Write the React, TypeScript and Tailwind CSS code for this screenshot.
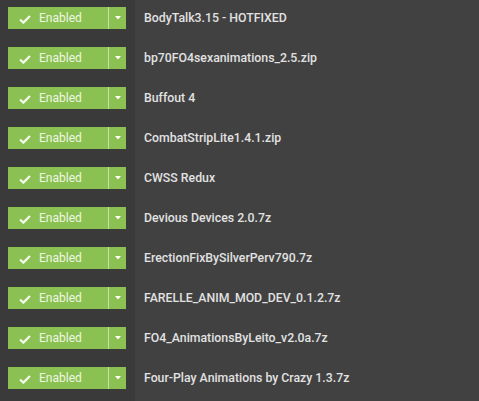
const mods = [
  'BodyTalk3.15 - HOTFIXED',
  'bp70FO4sexanimations_2.5.zip',
  'Buffout 4',
  'CombatStripLite1.4.1.zip',
  'CWSS Redux',
  'Devious Devices 2.0.7z',
  'ErectionFixBySilverPerv790.7z',
  'FARELLE_ANIM_MOD_DEV_0.1.2.7z',
  'FO4_AnimationsByLeito_v2.0a.7z',
  'Four-Play Animations by Crazy 1.3.7z',
];

const StatusButton = () => (
  <div className="flex h-[22px] w-[118px] items-stretch bg-[#8bc152] text-[#eef7e4]">
    <div className="flex flex-1 items-center pl-[11px]">
      <svg width="12" height="9" viewBox="0 0 12 9" className="mr-[8px] mt-[2px]">
        <path d="M1 4.5 L4.4 7.6 L11 1" fill="none" stroke="#f4faee" strokeWidth="2.2" />
      </svg>
      <span className="text-[12px]">Enabled</span>
    </div>
    <div className="w-[1px] bg-[#c4e3a2]" />
    <div className="flex w-[17px] items-center justify-center">
      <svg width="6" height="4" viewBox="0 0 6 4">
        <path d="M0 0 H6 L3 3.5 Z" fill="#ffffff" />
      </svg>
    </div>
  </div>
);

export default function App() {
  return (
    <div
      className="flex h-[401px] w-[479px] overflow-hidden bg-[#414141]"
      style={{ fontFamily: 'Roboto, "Liberation Sans", sans-serif' }}
    >
      <div className="flex w-[135px] shrink-0 flex-col bg-[#3a3a3a] pl-[8px] pt-[7px]">
        {mods.map((m) => (
          <div key={m} className="h-[40px] shrink-0">
            <StatusButton />
          </div>
        ))}
      </div>
      <div className="flex flex-1 flex-col pl-[9px] pt-[7px]">
        {mods.map((m) => (
          <div key={m} className="flex h-[40px] shrink-0 items-start">
            <div className="flex h-[22px] items-center text-[12.3px] font-medium text-[#e2e2e2]">{m}</div>
          </div>
        ))}
      </div>
    </div>
  );
}
